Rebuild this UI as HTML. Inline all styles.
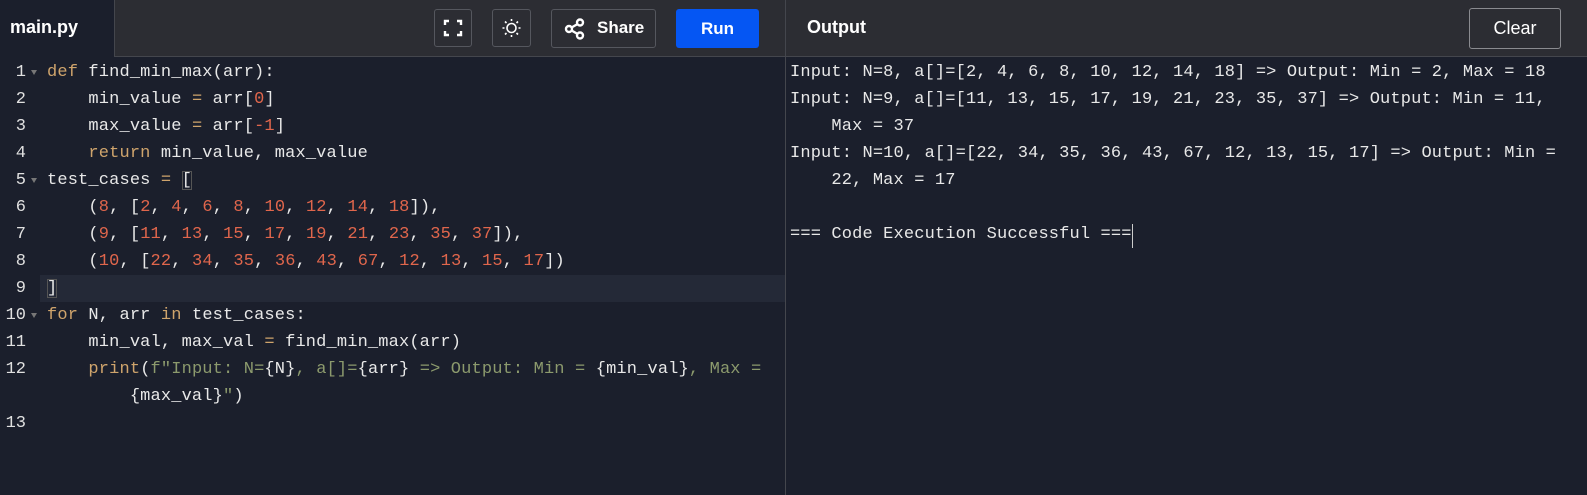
<!DOCTYPE html>
<html><head><meta charset="utf-8"><style>
*{margin:0;padding:0;box-sizing:border-box}
body{width:1587px;height:495px;background:#1b1f2c;overflow:hidden;position:relative;font-family:"Liberation Sans",sans-serif}
.hdr{position:absolute;top:0;height:57px;background:#2c2d33;border-bottom:1px solid #44464d}
.btn{position:absolute;border:1px solid #55575e;border-radius:3px}
.code,.out{position:absolute;font-family:"Liberation Mono",monospace;font-size:17px;color:#e8e8e8;white-space:pre;letter-spacing:0.15px}
.l{position:absolute;height:27px;line-height:27px}
.k{color:#cfa46c}.n{color:#e0664c}.s{color:#8c9a6d}
.ln{position:absolute;width:26px;text-align:right;font-family:"Liberation Mono",monospace;font-size:17px;color:#e0e0e0;height:27px;line-height:27px}
</style></head><body>
<div style="position:absolute;left:0;top:0;width:114px;height:57px;background:#1b1f2c;border-bottom:1px solid #1b1f2c"></div>
<div style="position:absolute;left:10px;top:17px;color:#fff;font-size:18px;font-weight:bold">main.py</div>
<div class="hdr" style="left:114px;width:672px;border-left:1px solid #44464d"></div>
<div class="hdr" style="left:786px;width:801px"></div>
<div style="position:absolute;left:785px;top:0;width:1px;height:495px;background:#44464d"></div>

<div class="btn" style="left:434px;top:9px;width:38px;height:38px">
<svg width="38" height="38" viewBox="0 0 38 38" style="position:absolute;left:-1px;top:-1px" fill="none" stroke="#fff" stroke-width="2.4"><path d="M11 16v-4h4M23 12h4v4M27 22v4h-4M15 26h-4v-4"/></svg></div>
<div class="btn" style="left:492px;top:9px;width:39px;height:38px">
<svg width="39" height="38" viewBox="0 0 39 38" style="position:absolute;left:-1px;top:-1px" fill="none" stroke="#fff" stroke-width="1.6"><circle cx="19.5" cy="19" r="4.5"/><path d="M19.5 10v2M19.5 26v2M10.5 19h2M26.5 19h2M13 12.5l1.5 1.5M24.5 24l1.5 1.5M13 25.5l1.5-1.5M24.5 14l1.5-1.5"/></svg></div>
<div class="btn" style="left:551px;top:9px;width:105px;height:39px">
<svg width="24" height="24" viewBox="0 0 24 24" style="position:absolute;left:11px;top:7px" fill="none" stroke="#fff" stroke-width="2.4"><circle cx="17" cy="5.5" r="3"/><circle cx="6" cy="12" r="3"/><circle cx="17" cy="18.5" r="3"/><path d="M8.6 10.5l5.8-3.4M8.6 13.5l5.8 3.4"/></svg>
<span style="position:absolute;left:45px;top:8px;color:#fff;font-weight:bold;font-size:17px">Share</span></div>
<div style="position:absolute;left:676px;top:9px;width:83px;height:39px;background:#0556f3;border-radius:3px;color:#fff;font-weight:bold;font-size:17px;text-align:center;line-height:39px">Run</div>

<div style="position:absolute;left:807px;top:17px;color:#fff;font-size:18px;font-weight:bold">Output</div>
<div class="btn" style="left:1469px;top:8px;width:92px;height:41px;border-color:#8a8b90;color:#fff;font-size:18px;text-align:center;line-height:39px">Clear</div>

<div style="position:absolute;left:40px;top:275px;width:745px;height:27px;background:#242937"></div>

<div class="ln" style="left:0;top:59px">1</div>
<div class="ln" style="left:0;top:86px">2</div>
<div class="ln" style="left:0;top:113px">3</div>
<div class="ln" style="left:0;top:140px">4</div>
<div class="ln" style="left:0;top:167px">5</div>
<div class="ln" style="left:0;top:194px">6</div>
<div class="ln" style="left:0;top:221px">7</div>
<div class="ln" style="left:0;top:248px">8</div>
<div class="ln" style="left:0;top:275px">9</div>
<div class="ln" style="left:0;top:302px">10</div>
<div class="ln" style="left:0;top:329px">11</div>
<div class="ln" style="left:0;top:356px">12</div>
<div class="ln" style="left:0;top:410px">13</div>
<div style="position:absolute;left:31px;top:70px;width:0;height:0;border-left:3.5px solid transparent;border-right:3.5px solid transparent;border-top:5px solid #777"></div>
<div style="position:absolute;left:31px;top:178px;width:0;height:0;border-left:3.5px solid transparent;border-right:3.5px solid transparent;border-top:5px solid #777"></div>
<div style="position:absolute;left:31px;top:313px;width:0;height:0;border-left:3.5px solid transparent;border-right:3.5px solid transparent;border-top:5px solid #777"></div>

<div class="code" style="left:47px;top:0">
<div class="l" style="top:59px"><span class="k">def</span> find_min_max(arr):</div>
<div class="l" style="top:86px">    min_value <span class="k">=</span> arr[<span class="n">0</span>]</div>
<div class="l" style="top:113px">    max_value <span class="k">=</span> arr[<span class="n">-1</span>]</div>
<div class="l" style="top:140px">    <span class="k">return</span> min_value, max_value</div>
<div class="l" style="top:167px">test_cases <span class="k">=</span> <span style="outline:1px solid #555;outline-offset:-1px">[</span></div>
<div class="l" style="top:194px">    (<span class="n">8</span>, [<span class="n">2</span>, <span class="n">4</span>, <span class="n">6</span>, <span class="n">8</span>, <span class="n">10</span>, <span class="n">12</span>, <span class="n">14</span>, <span class="n">18</span>]),</div>
<div class="l" style="top:221px">    (<span class="n">9</span>, [<span class="n">11</span>, <span class="n">13</span>, <span class="n">15</span>, <span class="n">17</span>, <span class="n">19</span>, <span class="n">21</span>, <span class="n">23</span>, <span class="n">35</span>, <span class="n">37</span>]),</div>
<div class="l" style="top:248px">    (<span class="n">10</span>, [<span class="n">22</span>, <span class="n">34</span>, <span class="n">35</span>, <span class="n">36</span>, <span class="n">43</span>, <span class="n">67</span>, <span class="n">12</span>, <span class="n">13</span>, <span class="n">15</span>, <span class="n">17</span>])</div>
<div class="l" style="top:275px"><span style="outline:1px solid #555;outline-offset:-1px">]</span></div>
<div class="l" style="top:302px"><span class="k">for</span> N, arr <span class="k">in</span> test_cases:</div>
<div class="l" style="top:329px">    min_val, max_val <span class="k">=</span> find_min_max(arr)</div>
<div class="l" style="top:356px">    <span class="k">print</span>(<span class="s">f"Input: N=</span>{N}<span class="s">, a[]=</span>{arr}<span class="s"> =&gt; Output: Min = </span>{min_val}<span class="s">, Max =</span></div>
<div class="l" style="top:383px">        {max_val}<span class="s">"</span>)</div>
</div>

<div class="out" style="left:790px;top:0">
<div class="l" style="top:59px">Input: N=8, a[]=[2, 4, 6, 8, 10, 12, 14, 18] =&gt; Output: Min = 2, Max = 18</div>
<div class="l" style="top:86px">Input: N=9, a[]=[11, 13, 15, 17, 19, 21, 23, 35, 37] =&gt; Output: Min = 11,</div>
<div class="l" style="top:113px">    Max = 37</div>
<div class="l" style="top:140px">Input: N=10, a[]=[22, 34, 35, 36, 43, 67, 12, 13, 15, 17] =&gt; Output: Min =</div>
<div class="l" style="top:167px">    22, Max = 17</div>
<div class="l" style="top:221px">=== Code Execution Successful ===</div>
</div>
<div style="position:absolute;left:1132px;top:224px;width:1px;height:24px;background:#ccc"></div>
</body></html>
